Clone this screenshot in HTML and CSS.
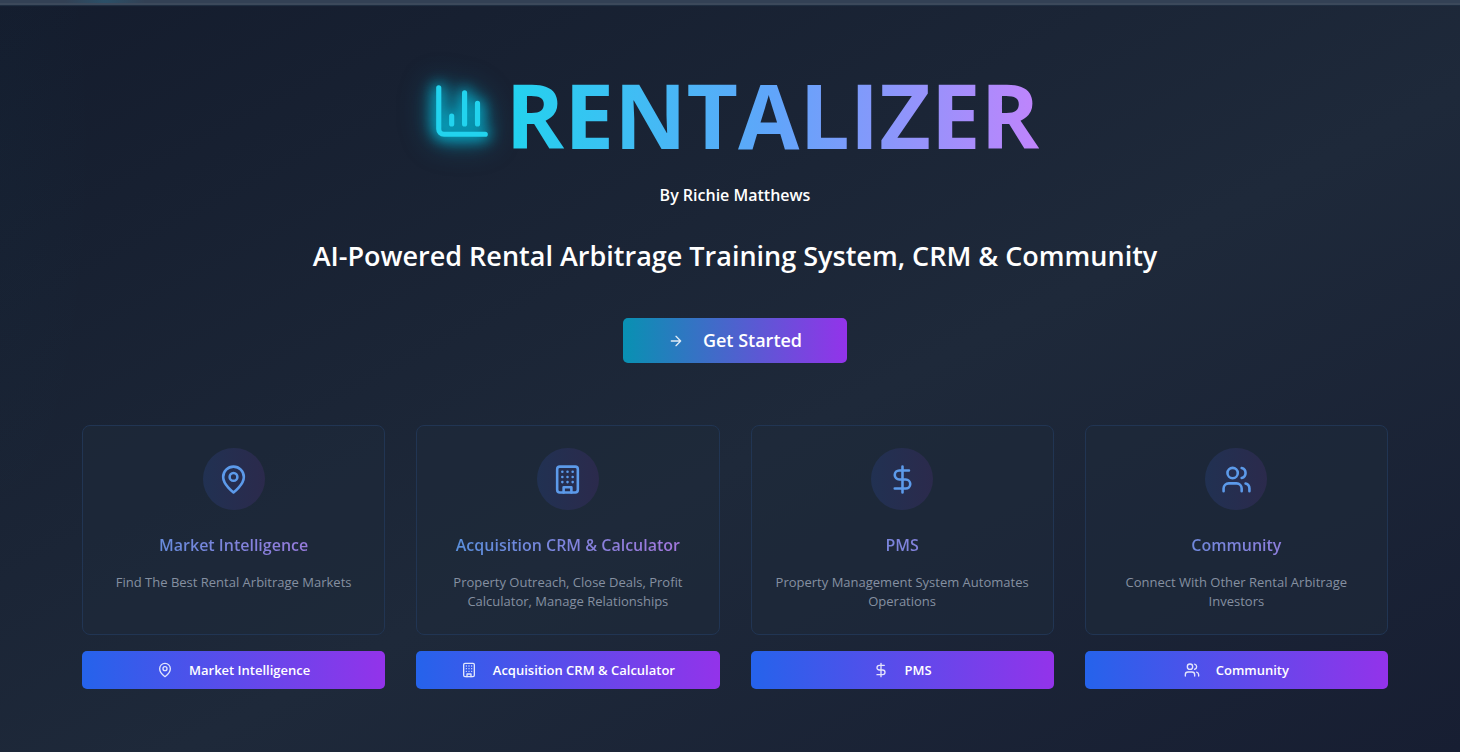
FILE: index.html
```html
<!DOCTYPE html>
<html lang="en">
<head>
<meta charset="utf-8">
<meta name="viewport" content="width=device-width, initial-scale=1">
<title>Rentalizer</title>
<link rel="stylesheet" href="styles.css">
</head>
<body>
<svg class="sprite" aria-hidden="true">
  <symbol id="chart" viewBox="0 0 24 24"><path d="M3 3v16a2 2 0 0 0 2 2h16M18 17V9M13 17V5M8 17v-3"/></symbol>
  <symbol id="arrow" viewBox="0 0 24 24"><path d="M5 12h14M12 5l7 7-7 7"/></symbol>
  <symbol id="pin" viewBox="0 0 24 24"><path d="M20 10c0 6-8 12-8 12s-8-6-8-12a8 8 0 0 1 16 0Z"/><circle cx="12" cy="10" r="3"/></symbol>
  <symbol id="building" viewBox="0 0 24 24"><rect x="4" y="2" width="16" height="20" rx="2"/><path d="M9 22v-4h6v4M8 6h.01M16 6h.01M12 6h.01M12 10h.01M12 14h.01M16 10h.01M16 14h.01M8 10h.01M8 14h.01"/></symbol>
  <symbol id="dollar" viewBox="0 0 24 24"><path d="M12 2v20M17 5H9.5a3.5 3.5 0 0 0 0 7h5a3.5 3.5 0 0 1 0 7H6"/></symbol>
  <symbol id="users" viewBox="0 0 24 24"><path d="M16 21v-2a4 4 0 0 0-4-4H6a4 4 0 0 0-4 4v2"/><circle cx="9" cy="7" r="4"/><path d="M22 21v-2a4 4 0 0 0-3-3.870M16 3.130a4 4 0 0 1 0 7.750"/></symbol>
</svg>
<div class="topbar"></div>
<main class="page">
  <header class="hero">
    <div class="brand">
      <svg class="icon brand-icon" aria-hidden="true"><use href="#chart"/></svg>
      <h1 class="brand-name">RENTALIZER</h1>
    </div>
    <p class="byline">By Richie Matthews</p>
    <h2 class="tagline">AI-Powered Rental Arbitrage Training System, CRM &amp; Community</h2>
    <button class="cta" type="button"><svg class="icon small-icon" aria-hidden="true"><use href="#arrow"/></svg>Get Started</button>
  </header>
  <section class="features">
    <article class="feature">
      <div class="card">
        <div class="badge"><svg class="icon badge-icon" aria-hidden="true"><use href="#pin"/></svg></div>
        <h3 class="card-title">Market Intelligence</h3>
        <p class="card-text">Find The Best Rental Arbitrage Markets</p>
      </div>
      <button class="feature-button" type="button"><svg class="icon small-icon" aria-hidden="true"><use href="#pin"/></svg>Market Intelligence</button>
    </article>
    <article class="feature">
      <div class="card">
        <div class="badge"><svg class="icon badge-icon" aria-hidden="true"><use href="#building"/></svg></div>
        <h3 class="card-title">Acquisition CRM &amp; Calculator</h3>
        <p class="card-text">Property Outreach, Close Deals, Profit Calculator, Manage Relationships</p>
      </div>
      <button class="feature-button" type="button"><svg class="icon small-icon" aria-hidden="true"><use href="#building"/></svg>Acquisition CRM &amp; Calculator</button>
    </article>
    <article class="feature">
      <div class="card">
        <div class="badge"><svg class="icon badge-icon" aria-hidden="true"><use href="#dollar"/></svg></div>
        <h3 class="card-title">PMS</h3>
        <p class="card-text">Property Management System Automates Operations</p>
      </div>
      <button class="feature-button" type="button"><svg class="icon small-icon" aria-hidden="true"><use href="#dollar"/></svg>PMS</button>
    </article>
    <article class="feature">
      <div class="card">
        <div class="badge"><svg class="icon badge-icon" aria-hidden="true"><use href="#users"/></svg></div>
        <h3 class="card-title">Community</h3>
        <p class="card-text">Connect With Other Rental Arbitrage Investors</p>
      </div>
      <button class="feature-button" type="button"><svg class="icon small-icon" aria-hidden="true"><use href="#users"/></svg>Community</button>
    </article>
  </section>
</main>
</body>
</html>
```
FILE: styles.css
```css
* { box-sizing: border-box; }
body {
  margin: 0;
  min-height: 100vh;
  font-family: "Open Sans", "Noto Sans", sans-serif;
  color: #fff;
  background:
    radial-gradient(ellipse 100px 400px at 0 150px, #06b6d404, #06b6d400),
    linear-gradient(to bottom right, #141c2d, #1e293a 56%, #171e32);
}
h1, h2, h3, p { margin: 0; }
button { border: 0; color: #fff; font-family: inherit; font-weight: 600; cursor: pointer; }
.sprite { position: absolute; width: 0; height: 0; }
.icon {
  flex: none;
  fill: none;
  stroke: currentColor;
  stroke-width: 2;
  stroke-linecap: round;
  stroke-linejoin: round;
}
.topbar {
  height: 5px;
  border-bottom: 2px solid #3c495b;
  background: radial-gradient(circle at 105px 0, #2b5068, #334155 40px);
  box-shadow: 0 1px 1px #1e2d40;
}
.page { padding: 55px 72px 63px 82px; }
.hero { display: flex; flex-direction: column; align-items: center; }
.brand { display: flex; align-items: flex-start; gap: 13px; }
.brand-icon {
  width: 62px;
  height: 62px;
  margin-top: 20px;
  color: #22d3ee;
  filter: drop-shadow(0 0 7px #06b6d4) drop-shadow(0 0 7px #06a5c0) drop-shadow(0 0 12px #0891b299);
}
.brand-name {
  font-size: 89px;
  line-height: 110px;
  font-weight: 700;
  color: transparent;
  background: linear-gradient(to right, #22d3ee, #60a5fa 50%, #c084fc);
  background-clip: text;
}
.byline { margin-top: 13px; font-size: 16px; line-height: 24px; font-weight: 600; }
.tagline { margin-top: 29px; font-size: 27px; line-height: 40px; font-weight: 600; text-align: center; }
.cta {
  display: flex;
  align-items: center;
  gap: 19px;
  margin-top: 42px;
  padding: 0 45px;
  font-size: 18px;
  line-height: 45px;
  border-radius: 5px;
  background: linear-gradient(to right, #0891b2, #9333ea);
}
.small-icon { width: 16px; height: 16px; opacity: .85; }
.features {
  display: grid;
  grid-template-columns: repeat(4, 1fr);
  gap: 31px;
  margin-top: 62px;
}
.feature { display: flex; flex-direction: column; gap: 16px; }
.card {
  flex: 1;
  display: flex;
  flex-direction: column;
  align-items: center;
  padding: 22px 23px 23px;
  border: 1px solid #213553;
  border-radius: 8px;
  background: #1e293b99;
  text-align: center;
}
.badge {
  display: grid;
  place-items: center;
  width: 62px;
  height: 62px;
  border-radius: 50%;
  background: linear-gradient(to right, #213152, #2b2a4c);
}
.badge-icon { width: 31px; height: 31px; color: #5c9aea; }
.card-title {
  align-self: stretch;
  margin-top: 23px;
  font-size: 16px;
  line-height: 24px;
  font-weight: 600;
  color: transparent;
  background: linear-gradient(to right, #5591dc, #a875dc);
  background-clip: text;
}
.card-text { margin-top: 16px; font-size: 13px; line-height: 19px; color: #8590a1; }
.feature-button {
  display: flex;
  align-items: center;
  justify-content: center;
  gap: 16px;
  padding: 0 16px;
  font-size: 13px;
  line-height: 38px;
  border-radius: 5px;
  background: linear-gradient(to right, #2563eb, #9333ea);
}
```
